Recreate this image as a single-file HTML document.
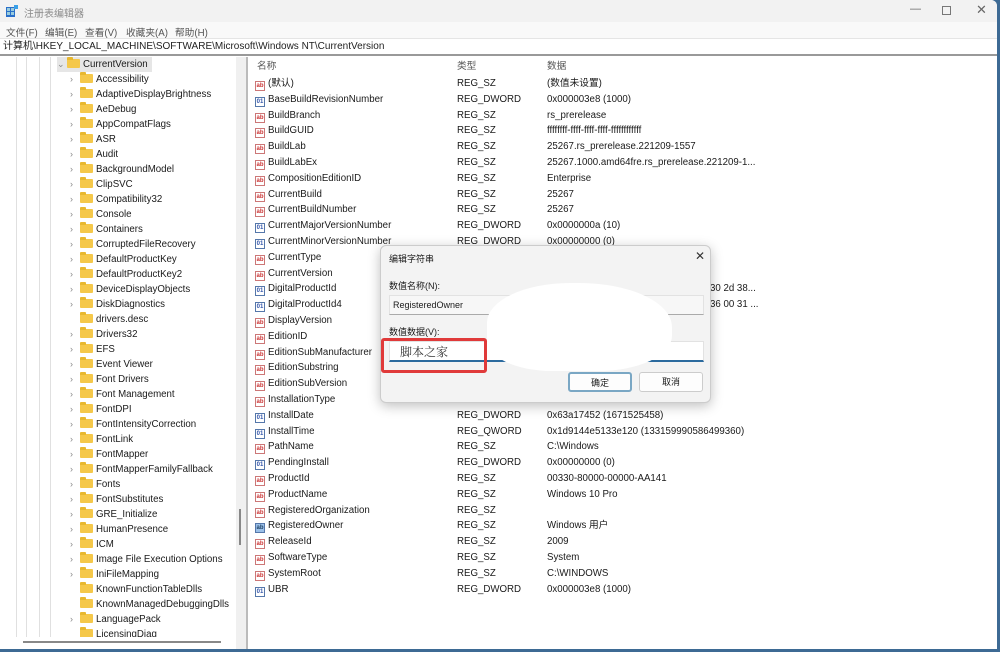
<!DOCTYPE html>
<html><head><meta charset="utf-8"><style>
*{margin:0;padding:0;box-sizing:border-box}
body{width:1000px;height:652px;overflow:hidden;background:#3d6a94;font-family:"Liberation Sans","Noto Sans CJK SC",sans-serif;font-size:9.7px;color:#1a1a1a;position:relative}
.win{position:absolute;left:0;top:0;width:997px;height:649px;background:#fff;border-radius:0 6px 0 0;overflow:hidden}
.title{position:absolute;left:0;top:0;width:100%;height:22px;background:#f2f2f2}
.title .t{position:absolute;left:24px;top:5px;color:#8a8a8a;font-size:10px}
.menu{position:absolute;left:0;top:22px;width:100%;height:16px;background:#f9f9f9;color:#555}
.menu span{position:absolute;top:3px}
.addr{position:absolute;left:0;top:38px;width:100%;height:18px;background:#fff;border-top:1px solid #e5e5e5;border-bottom:2px solid #999}
.addr span{position:absolute;left:3px;top:1px;font-size:10px;line-height:13px;color:#222}
.tree{position:absolute;left:3px;top:57px;width:233px;height:590px;background:#fff;overflow:hidden}
.vl{position:absolute;top:0;width:1px;height:585px;background:#e0e0e0}
.tr{position:absolute;left:0;height:15px;line-height:15px;white-space:nowrap}
.fold{display:inline-block;width:13px;height:9px;background:#f5c84a;border-radius:1px;vertical-align:-1px;margin-right:3px;position:relative}
.fold:before{content:"";position:absolute;left:0;top:-2px;width:6px;height:3px;background:#e8b830;border-radius:1px 1px 0 0}
.arr{display:inline-block;width:10px;color:#888;font-size:9px}
.split{position:absolute;left:236px;top:57px;width:12px;height:592px;background:#f0f0f0;border-right:2px solid #bbb}
.list{position:absolute;left:250px;top:59px;width:747px;height:592px;background:#fff}
.row{position:absolute;left:0;height:15.8px;line-height:15.8px;white-space:nowrap;width:740px}
.row b{font-weight:normal;position:absolute;top:0}
.ic{display:inline-block;width:10px;height:10px;border:1px solid #c77;font-size:6px;line-height:8px;color:#c33;text-align:center;vertical-align:-1px;margin-right:3px;font-weight:bold}
.ic.d{border-color:#57a;color:#35a}
.dlg{position:absolute;left:380px;top:245px;width:331px;height:158px;background:#f3f3f3;border:1px solid #ccc;border-radius:6px;box-shadow:0 3px 12px rgba(0,0,0,.25)}
.blob{position:absolute;left:487px;top:283px;width:185px;height:88px;background:#fff;border-radius:45% 50% 40% 35%}
.red{position:absolute;left:381px;top:338px;width:106px;height:35px;border:3px solid #e03a3a;border-radius:3px}
.btn{position:absolute;top:372px;width:64px;height:20px;background:#fdfdfd;border:1px solid #ccc;border-radius:3px;text-align:center;line-height:18px;font-size:9px}
</style></head><body>
<div class="win">
<div class="title">
<svg style="position:absolute;left:6px;top:5px" width="12" height="12"><rect x="0" y="2" width="9" height="10" fill="#2a6fc9"/><rect x="1" y="3" width="3" height="3" fill="#9cd"/><rect x="5" y="3" width="3" height="3" fill="#9cd"/><rect x="1" y="7" width="3" height="3" fill="#9cd"/><rect x="5" y="7" width="3" height="3" fill="#9cd"/><rect x="8" y="0" width="4" height="4" fill="#3aa0e8"/></svg>
<span class="t">注册表编辑器</span>
<span style="position:absolute;left:910px;top:3px;color:#666;font-size:11px">—</span>
<span style="position:absolute;left:942px;top:6px;width:9px;height:9px;border:1px solid #777"></span>
<span style="position:absolute;left:976px;top:2px;color:#666;font-size:13px">✕</span>
</div>
<div class="menu"><span style="left:6px">文件(F)</span><span style="left:45px">编辑(E)</span><span style="left:85px">查看(V)</span><span style="left:126px">收藏夹(A)</span><span style="left:175px">帮助(H)</span></div>
<div class="addr"><span>计算机\HKEY_LOCAL_MACHINE\SOFTWARE\Microsoft\Windows NT\CurrentVersion</span></div>
<div class="tree">
<div class="vl" style="left:13px"></div><div class="vl" style="left:23px"></div><div class="vl" style="left:36px"></div><div class="vl" style="left:47px"></div>
<div class="tr" style="top:0;left:54px;background:#e6e6e6;padding-right:4px"><span class="arr">⌄</span><span class="fold"></span>CurrentVersion</div>
<div style="position:absolute;left:67px;top:15px;line-height:15px">
<div><span class="arr">›</span><span class="fold"></span>Accessibility</div>
<div><span class="arr">›</span><span class="fold"></span>AdaptiveDisplayBrightness</div>
<div><span class="arr">›</span><span class="fold"></span>AeDebug</div>
<div><span class="arr">›</span><span class="fold"></span>AppCompatFlags</div>
<div><span class="arr">›</span><span class="fold"></span>ASR</div>
<div><span class="arr">›</span><span class="fold"></span>Audit</div>
<div><span class="arr">›</span><span class="fold"></span>BackgroundModel</div>
<div><span class="arr">›</span><span class="fold"></span>ClipSVC</div>
<div><span class="arr">›</span><span class="fold"></span>Compatibility32</div>
<div><span class="arr">›</span><span class="fold"></span>Console</div>
<div><span class="arr">›</span><span class="fold"></span>Containers</div>
<div><span class="arr">›</span><span class="fold"></span>CorruptedFileRecovery</div>
<div><span class="arr">›</span><span class="fold"></span>DefaultProductKey</div>
<div><span class="arr">›</span><span class="fold"></span>DefaultProductKey2</div>
<div><span class="arr">›</span><span class="fold"></span>DeviceDisplayObjects</div>
<div><span class="arr">›</span><span class="fold"></span>DiskDiagnostics</div>
<div><span class="arr"></span><span class="fold"></span>drivers.desc</div>
<div><span class="arr">›</span><span class="fold"></span>Drivers32</div>
<div><span class="arr">›</span><span class="fold"></span>EFS</div>
<div><span class="arr">›</span><span class="fold"></span>Event Viewer</div>
<div><span class="arr">›</span><span class="fold"></span>Font Drivers</div>
<div><span class="arr">›</span><span class="fold"></span>Font Management</div>
<div><span class="arr">›</span><span class="fold"></span>FontDPI</div>
<div><span class="arr">›</span><span class="fold"></span>FontIntensityCorrection</div>
<div><span class="arr">›</span><span class="fold"></span>FontLink</div>
<div><span class="arr">›</span><span class="fold"></span>FontMapper</div>
<div><span class="arr">›</span><span class="fold"></span>FontMapperFamilyFallback</div>
<div><span class="arr">›</span><span class="fold"></span>Fonts</div>
<div><span class="arr">›</span><span class="fold"></span>FontSubstitutes</div>
<div><span class="arr">›</span><span class="fold"></span>GRE_Initialize</div>
<div><span class="arr">›</span><span class="fold"></span>HumanPresence</div>
<div><span class="arr">›</span><span class="fold"></span>ICM</div>
<div><span class="arr">›</span><span class="fold"></span>Image File Execution Options</div>
<div><span class="arr">›</span><span class="fold"></span>IniFileMapping</div>
<div><span class="arr"></span><span class="fold"></span>KnownFunctionTableDlls</div>
<div><span class="arr"></span><span class="fold"></span>KnownManagedDebuggingDlls</div>
<div><span class="arr">›</span><span class="fold"></span>LanguagePack</div>
<div><span class="arr"></span><span class="fold"></span>LicensingDiag</div>
</div>
<div style="position:absolute;left:0;top:580px;width:233px;height:10px;background:#fff"></div>
<div style="position:absolute;left:20px;top:584px;width:198px;height:2px;background:#888"></div>
</div>
<div class="split"><div style="position:absolute;left:3px;top:452px;width:2px;height:36px;background:#888"></div></div>
<div class="list">
<div class="row" style="top:0;color:#555;left:5px"><b style="left:2px">名称</b><b style="left:202px">类型</b><b style="left:292px">数据</b></div>
<div style="position:absolute;left:5px;top:17px;width:740px">
<div class="row" style="top:0"><b><span class="ic">ab</span>(默认)</b><b style="left:202px">REG_SZ</b><b style="left:292px">(数值未设置)</b></div>
<div class="row" style="top:15.8px"><b><span class="ic d">01</span>BaseBuildRevisionNumber</b><b style="left:202px">REG_DWORD</b><b style="left:292px">0x000003e8 (1000)</b></div>
<div class="row" style="top:31.6px"><b><span class="ic">ab</span>BuildBranch</b><b style="left:202px">REG_SZ</b><b style="left:292px">rs_prerelease</b></div>
<div class="row" style="top:47.4px"><b><span class="ic">ab</span>BuildGUID</b><b style="left:202px">REG_SZ</b><b style="left:292px">ffffffff-ffff-ffff-ffff-ffffffffffff</b></div>
<div class="row" style="top:63.2px"><b><span class="ic">ab</span>BuildLab</b><b style="left:202px">REG_SZ</b><b style="left:292px">25267.rs_prerelease.221209-1557</b></div>
<div class="row" style="top:79px"><b><span class="ic">ab</span>BuildLabEx</b><b style="left:202px">REG_SZ</b><b style="left:292px">25267.1000.amd64fre.rs_prerelease.221209-1...</b></div>
<div class="row" style="top:94.8px"><b><span class="ic">ab</span>CompositionEditionID</b><b style="left:202px">REG_SZ</b><b style="left:292px">Enterprise</b></div>
<div class="row" style="top:110.6px"><b><span class="ic">ab</span>CurrentBuild</b><b style="left:202px">REG_SZ</b><b style="left:292px">25267</b></div>
<div class="row" style="top:126.4px"><b><span class="ic">ab</span>CurrentBuildNumber</b><b style="left:202px">REG_SZ</b><b style="left:292px">25267</b></div>
<div class="row" style="top:142.2px"><b><span class="ic d">01</span>CurrentMajorVersionNumber</b><b style="left:202px">REG_DWORD</b><b style="left:292px">0x0000000a (10)</b></div>
<div class="row" style="top:158px"><b><span class="ic d">01</span>CurrentMinorVersionNumber</b><b style="left:202px">REG_DWORD</b><b style="left:292px">0x00000000 (0)</b></div>
<div class="row" style="top:173.8px"><b><span class="ic">ab</span>CurrentType</b></div>
<div class="row" style="top:189.6px"><b><span class="ic">ab</span>CurrentVersion</b></div>
<div class="row" style="top:205.4px"><b><span class="ic d">01</span>DigitalProductId</b><b style="left:455px">30 2d 38...</b></div>
<div class="row" style="top:221.2px"><b><span class="ic d">01</span>DigitalProductId4</b><b style="left:455px">36 00 31 ...</b></div>
<div class="row" style="top:237px"><b><span class="ic">ab</span>DisplayVersion</b></div>
<div class="row" style="top:252.8px"><b><span class="ic">ab</span>EditionID</b></div>
<div class="row" style="top:268.6px"><b><span class="ic">ab</span>EditionSubManufacturer</b></div>
<div class="row" style="top:284.4px"><b><span class="ic">ab</span>EditionSubstring</b></div>
<div class="row" style="top:300.2px"><b><span class="ic">ab</span>EditionSubVersion</b></div>
<div class="row" style="top:316px"><b><span class="ic">ab</span>InstallationType</b></div>
<div class="row" style="top:331.8px"><b><span class="ic d">01</span>InstallDate</b><b style="left:202px">REG_DWORD</b><b style="left:292px">0x63a17452 (1671525458)</b></div>
<div class="row" style="top:347.6px"><b><span class="ic d">01</span>InstallTime</b><b style="left:202px">REG_QWORD</b><b style="left:292px">0x1d9144e5133e120 (133159990586499360)</b></div>
<div class="row" style="top:363.4px"><b><span class="ic">ab</span>PathName</b><b style="left:202px">REG_SZ</b><b style="left:292px">C:\Windows</b></div>
<div class="row" style="top:379.2px"><b><span class="ic d">01</span>PendingInstall</b><b style="left:202px">REG_DWORD</b><b style="left:292px">0x00000000 (0)</b></div>
<div class="row" style="top:395px"><b><span class="ic">ab</span>ProductId</b><b style="left:202px">REG_SZ</b><b style="left:292px">00330-80000-00000-AA141</b></div>
<div class="row" style="top:410.8px"><b><span class="ic">ab</span>ProductName</b><b style="left:202px">REG_SZ</b><b style="left:292px">Windows 10 Pro</b></div>
<div class="row" style="top:426.6px"><b><span class="ic">ab</span>RegisteredOrganization</b><b style="left:202px">REG_SZ</b></div>
<div class="row" style="top:442.4px"><b><span class="ic" style="background:#9bc0e8;border-color:#57a;color:#246">ab</span>RegisteredOwner</b><b style="left:202px">REG_SZ</b><b style="left:292px">Windows 用户</b></div>
<div class="row" style="top:458.2px"><b><span class="ic">ab</span>ReleaseId</b><b style="left:202px">REG_SZ</b><b style="left:292px">2009</b></div>
<div class="row" style="top:474px"><b><span class="ic">ab</span>SoftwareType</b><b style="left:202px">REG_SZ</b><b style="left:292px">System</b></div>
<div class="row" style="top:489.8px"><b><span class="ic">ab</span>SystemRoot</b><b style="left:202px">REG_SZ</b><b style="left:292px">C:\WINDOWS</b></div>
<div class="row" style="top:505.6px"><b><span class="ic d">01</span>UBR</b><b style="left:202px">REG_DWORD</b><b style="left:292px">0x000003e8 (1000)</b></div>
</div>
</div>
</div>
<div class="dlg">
<span style="position:absolute;left:8px;top:6px;font-size:9px">编辑字符串</span>
<span style="position:absolute;left:314px;top:3px;font-size:12px;color:#333">✕</span>
<span style="position:absolute;left:8px;top:33px;font-size:9px">数值名称(N):</span>
<div style="position:absolute;left:8px;top:49px;width:315px;height:20px;background:#f7f7f7;border:1px solid #e2e2e2;border-bottom:1px solid #aaa;padding:4px 3px;font-size:9px">RegisteredOwner</div>
<span style="position:absolute;left:8px;top:79px;font-size:9px">数值数据(V):</span>
<div style="position:absolute;left:8px;top:95px;width:315px;height:21px;background:#fff;border:1px solid #e2e2e2;border-bottom:2px solid #2b6a9e;padding:1px 10px;font-size:12px;font-family:'Noto Serif CJK SC',serif;color:#333">脚本之家</div>
</div>
<div class="blob"></div>
<div class="red"></div>
<div class="btn" style="left:568px;border:2px solid #7aa7c4">确定</div>
<div class="btn" style="left:639px">取消</div>
</body></html>
